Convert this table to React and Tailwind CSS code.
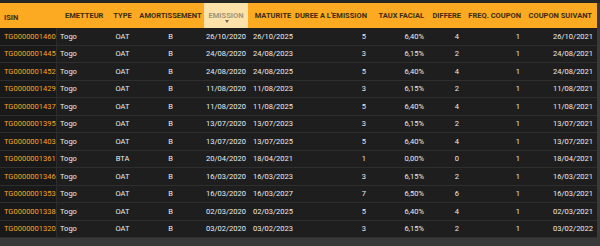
const rows = [
  ["TG0000001460", "Togo", "OAT", "B", "26/10/2020", "26/10/2025", "5", "6,40%", "4", "1", "26/10/2021"],
  ["TG0000001445", "Togo", "OAT", "B", "24/08/2020", "24/08/2023", "3", "6,15%", "2", "1", "24/08/2021"],
  ["TG0000001452", "Togo", "OAT", "B", "24/08/2020", "24/08/2025", "5", "6,40%", "4", "1", "24/08/2021"],
  ["TG0000001429", "Togo", "OAT", "B", "11/08/2020", "11/08/2023", "3", "6,15%", "2", "1", "11/08/2021"],
  ["TG0000001437", "Togo", "OAT", "B", "11/08/2020", "11/08/2025", "5", "6,40%", "4", "1", "11/08/2021"],
  ["TG0000001395", "Togo", "OAT", "B", "13/07/2020", "13/07/2023", "3", "6,15%", "2", "1", "13/07/2021"],
  ["TG0000001403", "Togo", "OAT", "B", "13/07/2020", "13/07/2025", "5", "6,40%", "4", "1", "13/07/2021"],
  ["TG0000001361", "Togo", "BTA", "B", "20/04/2020", "18/04/2021", "1", "0,00%", "0", "1", "18/04/2021"],
  ["TG0000001346", "Togo", "OAT", "B", "16/03/2020", "16/03/2023", "3", "6,15%", "2", "1", "16/03/2021"],
  ["TG0000001353", "Togo", "OAT", "B", "16/03/2020", "16/03/2027", "7", "6,50%", "6", "1", "16/03/2021"],
  ["TG0000001338", "Togo", "OAT", "B", "02/03/2020", "02/03/2025", "5", "6,40%", "4", "1", "02/03/2021"],
  ["TG0000001320", "Togo", "OAT", "B", "03/02/2020", "03/02/2023", "3", "6,15%", "2", "1", "03/02/2022"],
]

const grid = "grid grid-cols-[57px_51px_29px_67px_44px_50px_72px_58px_36px_60px_73px]"

// alignment of each column, body cells
const cellCls = [
  "pl-1 text-left text-[#f5a623] bg-[#191919] border-r border-[#2c2c2c]",
  "pl-[3px] text-left",
  "text-center",
  "text-center",
  "text-center",
  "text-center",
  "pr-[4px] text-right",
  "pr-[4px] text-right",
  "pr-[5px] text-right",
  "pr-[4px] text-right",
  "pr-[4px] text-right",
]

const Header = () => (
  <div className={`${grid} h-[25px] bg-[#fbaa22] text-[#3d2b10] font-bold text-[7.5px] leading-none whitespace-nowrap`}>
    <div className="pl-1 pt-[5px] flex items-center">ISIN</div>
    <div className="pl-2 flex items-center">EMETTEUR</div>
    <div className="flex items-center justify-center">TYPE</div>
    <div className="flex items-center justify-center">AMORTISSEMENT</div>
    <div className="relative flex items-center justify-center bg-[#fde3a9] text-[#a39478]">
      EMISSION
      <span className="absolute left-[21px] top-[17px] w-0 h-0 border-l-[2.5px] border-r-[2.5px] border-t-[3px] border-l-transparent border-r-transparent border-t-[#6f6656]"></span>
    </div>
    <div className="flex items-center justify-center">MATURITE</div>
    <div className="pr-[3px] flex items-center justify-end">DUREE A L'EMISSION</div>
    <div className="pr-[4px] flex items-center justify-end">TAUX FACIAL</div>
    <div className="pr-[3px] flex items-center justify-end">DIFFERE</div>
    <div className="pr-[3px] flex items-center justify-end">FREQ. COUPON</div>
    <div className="pr-[5px] flex items-center justify-end">COUPON SUIVANT</div>
  </div>
)

export default function App() {
  return (
    <div className="w-[600px] h-[246px] bg-[#393939] flex flex-col overflow-hidden" style={{ fontFamily: "Roboto, 'Liberation Sans', sans-serif" }}>
      <div className="h-[3px] bg-[#262626]"></div>
      <div className="w-[597px]">
        <Header />
        {rows.map((r) => (
          <div key={r[0]} className={`${grid} h-[17.5px] bg-[#1e1e1e] border-b border-[#2e2e2e] text-[7.5px] font-normal text-[#ececec] leading-none`}>
            {r.map((v, i) => (
              <div key={i} className={`flex items-center ${cellCls[i]}`}>
                <span className="w-full">{v}</span>
              </div>
            ))}
          </div>
        ))}
      </div>
    </div>
  )
}
